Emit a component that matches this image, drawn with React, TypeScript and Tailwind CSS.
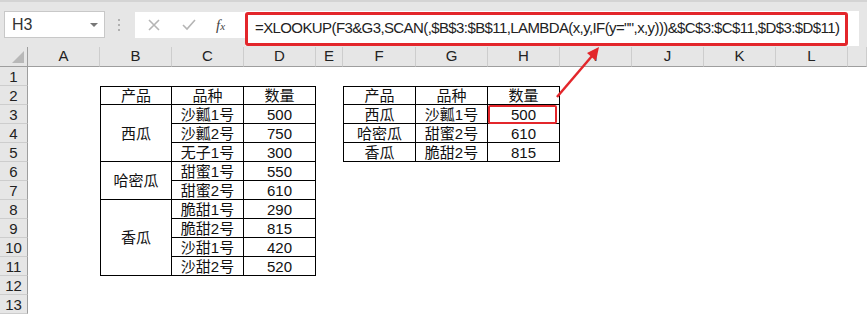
import React from 'react';

// 列宽、行号
const cols = ['A', 'B', 'C', 'D', 'E', 'F', 'G', 'H', 'I', 'J', 'K', 'L', ''];
const rows = [1, 2, 3, 4, 5, 6, 7, 8, 9, 10, 11, 12, 13];

const rowStart = [
  'row-start-1', 'row-start-2', 'row-start-3', 'row-start-4', 'row-start-5',
  'row-start-6', 'row-start-7', 'row-start-8', 'row-start-9', 'row-start-10',
  'row-start-11', 'row-start-12', 'row-start-13', 'row-start-14',
];
const colStart = [
  'col-start-1', 'col-start-2', 'col-start-3', 'col-start-4', 'col-start-5',
  'col-start-6', 'col-start-7', 'col-start-8', 'col-start-9', 'col-start-10',
  'col-start-11', 'col-start-12', 'col-start-13', 'col-start-14',
];

interface Cell {
  r: number; // sheet row (1-based)
  c: number; // sheet column (A=1)
  text: string;
  span?: 'row-span-2' | 'row-span-3' | 'row-span-4';
  top?: boolean;
  left?: boolean;
  hl?: boolean;
}

const left: Cell[] = [
  { r: 2, c: 2, text: '产品', top: true, left: true },
  { r: 2, c: 3, text: '品种', top: true },
  { r: 2, c: 4, text: '数量', top: true },
  { r: 3, c: 2, text: '西瓜', span: 'row-span-3', left: true },
  { r: 6, c: 2, text: '哈密瓜', span: 'row-span-2', left: true },
  { r: 8, c: 2, text: '香瓜', span: 'row-span-4', left: true },
  ...[
    ['沙瓤1号', '500'],
    ['沙瓤2号', '750'],
    ['无子1号', '300'],
    ['甜蜜1号', '550'],
    ['甜蜜2号', '610'],
    ['脆甜1号', '290'],
    ['脆甜2号', '815'],
    ['沙甜1号', '420'],
    ['沙甜2号', '520'],
  ].flatMap(([k, v], i) => [
    { r: 3 + i, c: 3, text: k },
    { r: 3 + i, c: 4, text: v },
  ]),
];

const right: Cell[] = [
  ['产品', '品种', '数量'],
  ['西瓜', '沙瓤1号', '500'],
  ['哈密瓜', '甜蜜2号', '610'],
  ['香瓜', '脆甜2号', '815'],
].flatMap((row, i) =>
  row.map((t, j) => ({
    r: 2 + i,
    c: 6 + j,
    text: t,
    top: i === 0,
    left: j === 0,
    hl: i === 1 && j === 2,
  }))
);

const font = { fontFamily: '"Liberation Sans", "Noto Sans CJK SC", sans-serif' };

const TableCell: React.FC<{ cell: Cell }> = ({ cell }) => (
  <div
    className={`${rowStart[cell.r]} ${colStart[cell.c]} ${cell.span ?? ''} relative flex items-center justify-center border-r border-b border-black text-[15px] leading-none text-[#111] ${
      cell.top ? 'border-t' : ''
    } ${cell.left ? 'border-l' : ''}`}
  >
    {cell.text}
    {cell.hl && (
      <div className="absolute left-0 right-[2px] top-0 bottom-[-1px] rounded-[2px] border-2 border-[#e3262b]" />
    )}
  </div>
);

export default function App() {
  const formula =
    '=XLOOKUP(F3&G3,SCAN(,$B$3:$B$11,LAMBDA(x,y,IF(y="",x,y)))&$C$3:$C$11,$D$3:$D$11)';

  return (
    <div className="relative h-[314px] w-[867px] overflow-hidden bg-white" style={font}>
      {/* 编辑栏 */}
      <div className="flex h-[47px] items-start border-t-2 border-[#d4d4d4] bg-[#e6e6e6] pt-[9px]">
        <div className="ml-[4px] flex h-[27px] w-[101px] items-center justify-between border border-[#c8c8c8] bg-white pl-[7px] pr-[6px]">
          <span className="text-[16px] text-[#333]">H3</span>
          <span className="h-0 w-0 border-x-[4px] border-t-[4px] border-x-transparent border-t-[#777]" />
        </div>
        <div className="ml-[13px] mt-[8px] flex flex-col gap-[3px]">
          <span className="h-[2px] w-[2px] bg-[#b0b0b0]" />
          <span className="h-[2px] w-[2px] bg-[#b0b0b0]" />
          <span className="h-[2px] w-[2px] bg-[#b0b0b0]" />
        </div>
        <div className="ml-[15px] mt-[1px] flex h-[26px] w-[110px] items-center bg-white">
          <svg width="14" height="14" viewBox="0 0 14 14" className="ml-[12px]">
            <path d="M2 2 L12 12 M12 2 L2 12" stroke="#b5b5b5" strokeWidth="1.6" />
          </svg>
          <svg width="16" height="14" viewBox="0 0 16 14" className="ml-[20px]">
            <path d="M2 7 L6 11 L14 2" stroke="#b5b5b5" strokeWidth="1.6" fill="none" />
          </svg>
          <span
            className="ml-[19px] text-[15px] italic text-[#444]"
            style={{ fontFamily: '"Liberation Serif", serif' }}
          >
            f<span className="text-[11px]">x</span>
          </span>
        </div>
        <div className="flex h-[35px] w-[614px] items-center bg-white">
          <div className="flex h-[34px] w-[603px] items-center rounded-[3px] border-[3px] border-[#e3262b] pl-[7px]">
            <span className="whitespace-nowrap text-[15px] tracking-[-0.6px] text-[#222]">{formula}</span>
          </div>
        </div>
      </div>

      {/* 表格区 */}
      <div className="grid grid-cols-[28px_72px_72px_72px_72px_27px_73px_72px_72px_72px_72px_72px_72px_1fr] grid-rows-[20px_repeat(13,19px)]">
        <div className="relative row-start-1 col-start-1 border-r border-b border-[#9e9e9e] bg-[#e6e6e6]">
          <span className="absolute bottom-[3px] right-[3px] h-0 w-0 border-b-[12px] border-l-[12px] border-b-[#b8b8b8] border-l-transparent" />
        </div>
        {cols.map((c, i) => (
          <div
            key={`h${i}`}
            className={`row-start-1 ${colStart[i + 1]} flex items-center justify-center border-r border-b border-r-[#cdcdcd] border-b-[#9e9e9e] bg-[#e6e6e6] text-[15px] text-[#222]`}
          >
            {c}
          </div>
        ))}
        {rows.map((r) => (
          <div
            key={`r${r}`}
            className={`${rowStart[r]} col-start-1 flex items-center justify-center border-r border-b border-r-[#9e9e9e] border-b-[#cdcdcd] bg-[#e6e6e6] text-[15px] leading-none text-[#222]`}
          >
            {r}
          </div>
        ))}
        {[...left, ...right].map((cell, i) => (
          <TableCell key={i} cell={cell} />
        ))}
      </div>

      {/* 红色箭头 */}
      <svg className="pointer-events-none absolute left-0 top-0" width="867" height="314">
        <line x1="557" y1="97" x2="592" y2="56" stroke="#e3262b" strokeWidth="2.5" />
        <polygon points="599,47 587,53 596,61" fill="#e3262b" />
      </svg>
    </div>
  );
}
